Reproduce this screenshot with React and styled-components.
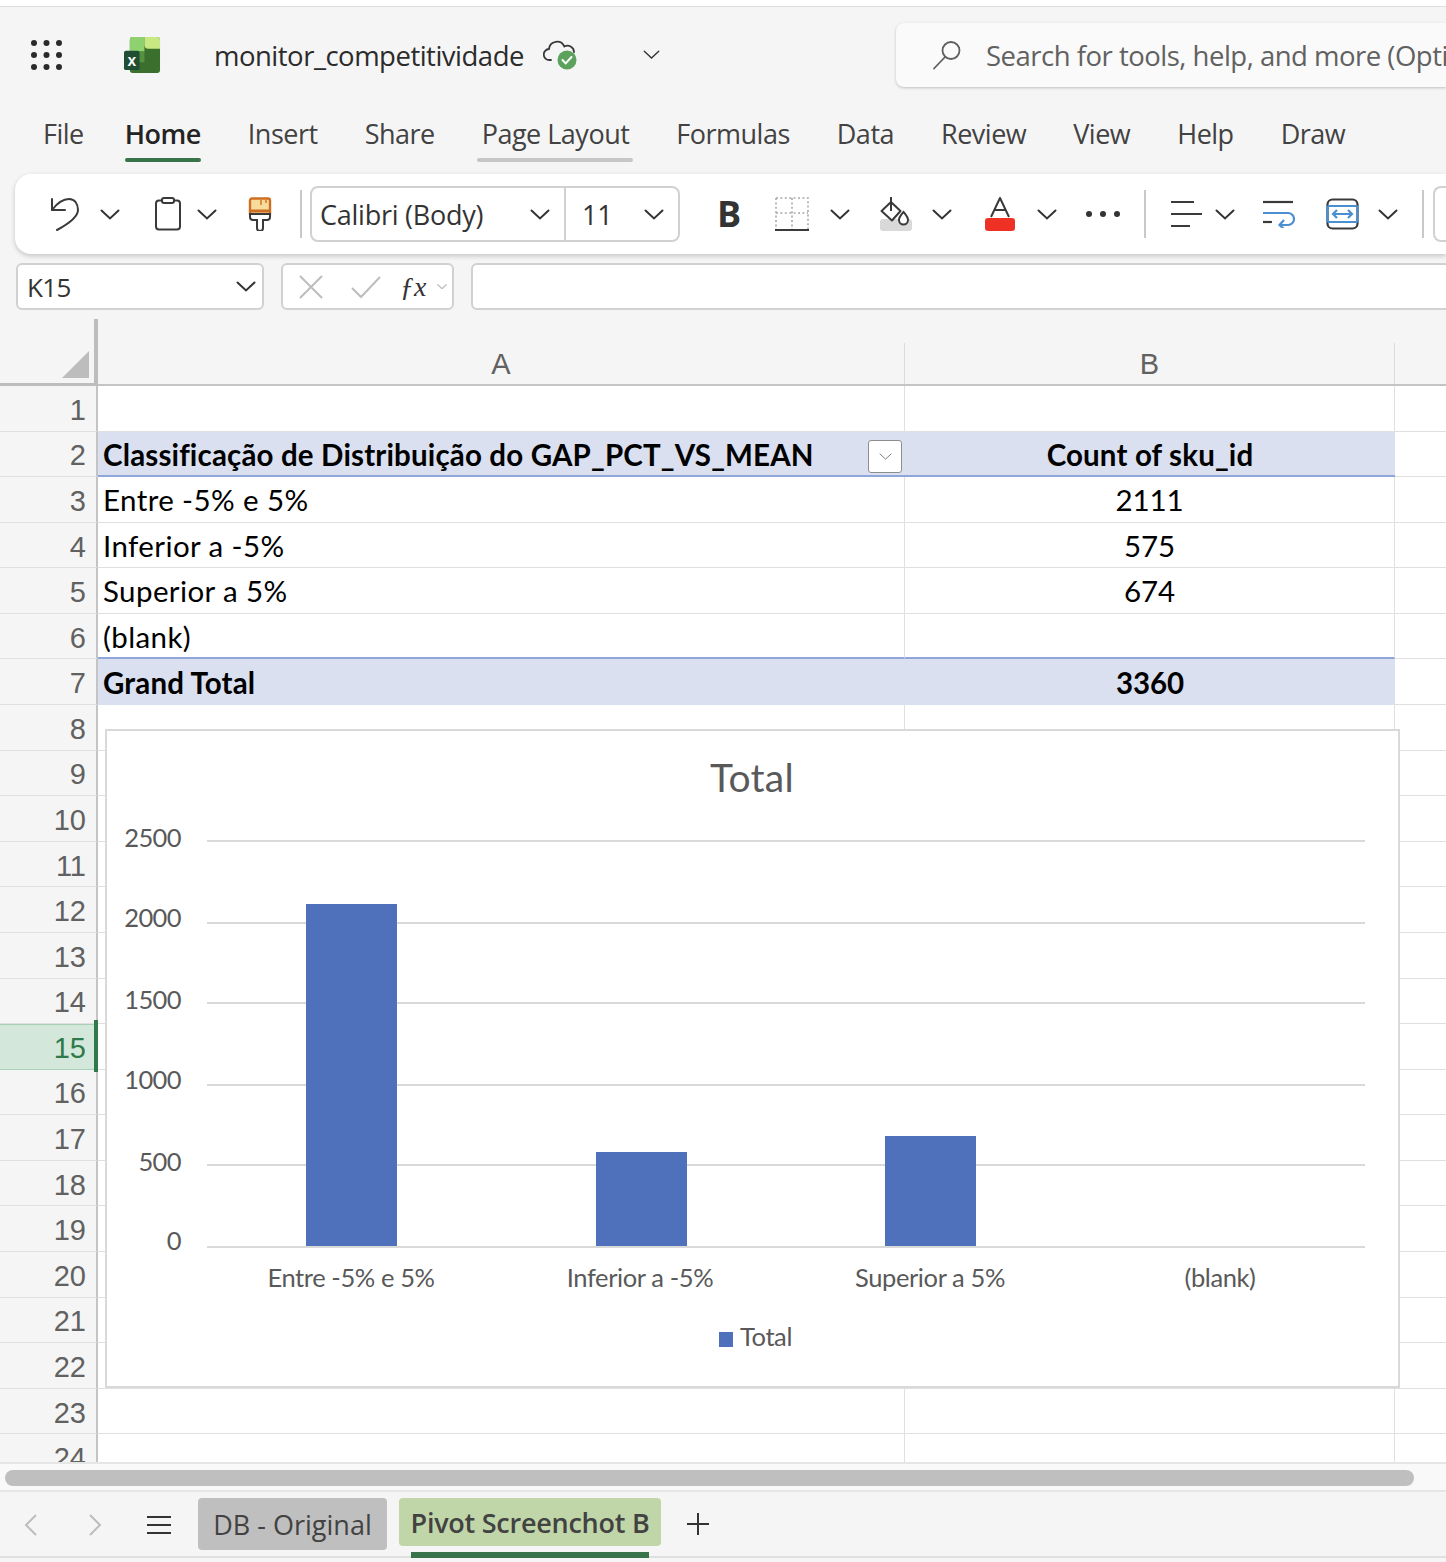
import React from "react";
import styled, { createGlobalStyle } from "styled-components";

const UI_FONT = `"Open Sans", "Noto Sans", sans-serif`;
const CELL_FONT = `Lato, "Open Sans", sans-serif`;

const GlobalStyle = createGlobalStyle`
  html, body {
    margin: 0;
    padding: 0;
    background: #fff;
  }
  * {
    box-sizing: border-box;
  }
`;

const Shell = styled.div`
  width: 1446px;
  height: 1562px;
  overflow: hidden;
  background: #f5f5f5;
  font-family: ${UI_FONT};
  display: flex;
  flex-direction: column;
`;

const TopStrip = styled.div`
  height: 7px;
  flex: none;
  background: #fff;
  border-bottom: 1px solid #dedede;
`;

const TitleBar = styled.div`
  height: 96px;
  flex: none;
  display: flex;
  align-items: center;
  padding-left: 31px;
`;

const FileName = styled.div`
  margin-left: 53px;
  width: 309px;
  font-size: 27.5px;
  letter-spacing: -0.5px;
  color: #2b2b2b;
  white-space: nowrap;
`;

const SearchBox = styled.div`
  margin-left: auto;
  width: 550px;
  height: 64px;
  flex: none;
  display: flex;
  align-items: center;
  gap: 24px;
  padding-left: 36px;
  background: #fafafa;
  border-radius: 8px 0 0 8px;
  box-shadow: 0 1px 3px rgba(0, 0, 0, 0.22);
  color: #616161;
  font-size: 27.5px;
  letter-spacing: -0.5px;
  white-space: nowrap;
  overflow: hidden;
  svg {
    flex: none;
  }
`;

const MenuBar = styled.div`
  height: 59px;
  flex: none;
  display: flex;
  gap: 47px;
  padding-left: 43px;
`;

const MenuItem = styled.div`
  position: relative;
  height: 59px;
  line-height: 62px;
  font-size: 27px;
  letter-spacing: -0.5px;
  white-space: nowrap;
  margin-left: ${(p) => (p.$active ? -6 : 0)}px;
  color: ${(p) => (p.$active ? "#242424" : "#424242")};
  font-weight: ${(p) => (p.$active ? 600 : 400)};
  &::after {
    content: "";
    display: ${(p) => (p.$line ? "block" : "none")};
    position: absolute;
    left: ${(p) => (p.$active ? "0" : "-5px")};
    right: ${(p) => (p.$active ? "0" : "-4px")};
    bottom: 0;
    height: 4px;
    border-radius: 2px;
    background: ${(p) => (p.$active ? "#38734a" : "#c6c6c6")};
  }
`;

const Ribbon = styled.div`
  margin: 12px 0 0 15px;
  height: 80px;
  flex: none;
  display: flex;
  align-items: center;
  background: #fff;
  border-radius: 16px 0 0 16px;
  box-shadow: 0 2px 5px rgba(0, 0, 0, 0.2);
`;

const Slot = styled.div`
  flex: none;
  margin-left: ${(p) => p.$ml || 0}px;
  display: flex;
  align-items: center;
  justify-content: center;
`;

const RibbonDivider = styled.div`
  flex: none;
  width: 2px;
  height: 48px;
  margin-left: ${(p) => p.$ml}px;
  background: #c8c8c8;
`;

const FontGroup = styled.div`
  flex: none;
  width: 370px;
  height: 56px;
  margin-left: 8px;
  display: flex;
  border: 2px solid #d1d1d1;
  border-radius: 8px;
  color: #333;
  font-size: 27px;
  letter-spacing: -0.25px;
`;

const FontField = styled.div`
  width: ${(p) => p.$w}px;
  flex: none;
  display: flex;
  align-items: center;
  justify-content: space-between;
  padding: 0 14px 0 8px;
  border-right: ${(p) => (p.$split ? "2px solid #d1d1d1" : "none")};
  white-space: nowrap;
  &:last-child {
    padding-left: 16px;
  }
`;

const BoldMark = styled.span`
  font-family: ${UI_FONT};
  font-weight: 700;
  font-size: 36px;
  line-height: 40px;
  color: #333;
`;

const RibbonStub = styled.div`
  flex: none;
  width: 40px;
  height: 56px;
  margin-left: 9px;
  border: 2px solid #d1d1d1;
  border-radius: 8px 0 0 8px;
  border-right: none;
`;

const FormulaRow = styled.div`
  margin-top: 9px;
  padding-left: 16px;
  height: 47px;
  flex: none;
  display: flex;
`;

const FormulaBox = styled.div`
  background: #fff;
  border: 2px solid #d1d1d1;
  border-radius: 6px;
  height: 47px;
  flex: none;
  width: ${(p) => p.$w}px;
  margin-left: ${(p) => p.$ml || 0}px;
  display: flex;
  align-items: center;
`;

const NameText = styled.span`
  flex: 1;
  padding-left: 9px;
  font-size: 26px;
  letter-spacing: -0.6px;
  color: #333;
`;

const ColumnHead = styled.div`
  margin-top: 9px;
  height: 67px;
  flex: none;
  display: grid;
  grid-template-columns: 98px 807px 490px 1fr;
  border-bottom: 2px solid #c4c4c4;
`;

const Corner = styled.div`
  position: relative;
  border-right: 4px solid #bdbdbd;
  margin-bottom: -2px;
  &::before {
    content: "";
    position: absolute;
    left: 0;
    right: -4px;
    bottom: 0;
    height: 3px;
    background: #bdbdbd;
  }
  &::after {
    content: "";
    position: absolute;
    left: 62px;
    bottom: 8px;
    width: 27px;
    height: 27px;
    background: #bdbdbd;
    clip-path: polygon(100% 0, 100% 100%, 0 100%);
  }
`;

const ColLabel = styled.div`
  margin-top: 24px;
  padding-top: 2px;
  display: flex;
  align-items: center;
  justify-content: center;
  border-right: ${(p) => (p.$plain ? "none" : "1px solid #dcdcdc")};
  font-family: "Liberation Sans", sans-serif;
  font-size: 29px;
  color: #616161;
`;

const Sheet = styled.div`
  position: relative;
  height: 1076px;
  flex: none;
  overflow: hidden;
  background: #fff;
`;

const Row = styled.div`
  display: grid;
  grid-template-columns: 98px 807px 490px 1fr;
  height: 45.58px;
`;

const RowHead = styled.div`
  display: flex;
  align-items: center;
  justify-content: flex-end;
  padding: 4px 10px 0 0;
  background: ${(p) => (p.$selected ? "#d3e8da" : "#f5f5f5")};
  border-right: 2px solid #c4c4c4;
  border-bottom: 1px solid ${(p) => (p.$selected ? "#a9cfb6" : "#e0e0e0")};
  border-top: ${(p) => (p.$selected ? "1px solid #a9cfb6" : "none")};
  font-family: "Liberation Sans", sans-serif;
  font-size: 29px;
  color: ${(p) => (p.$selected ? "#2f7a4b" : "#616161")};
`;

const Cell = styled.div`
  position: relative;
  display: flex;
  align-items: center;
  justify-content: ${(p) => (p.$center ? "center" : "flex-start")};
  padding-left: ${(p) => (p.$center ? 0 : 5)}px;
  padding-top: ${(p) => (p.$under ? 2 : 0)}px;
  background: ${(p) => (p.$band ? "#dae0f0" : "#fff")};
  border-right: ${(p) => (p.$band || p.$free ? "none" : "1px solid #e0e0e0")};
  border-bottom: ${(p) =>
    p.$under ? "2px solid #8ea6da" : p.$band ? "none" : "1px solid #e0e0e0"};
  font-family: ${CELL_FONT};
  font-size: 29.5px;
  letter-spacing: ${(p) => (p.$num ? "-0.1px" : p.$band ? "0.15px" : "0.4px")};
  font-weight: ${(p) => (p.$band ? 700 : 400)};
  color: #000;
  white-space: nowrap;
`;

const FilterButton = styled.div`
  position: absolute;
  right: 3px;
  top: 8px;
  width: 34px;
  height: 33px;
  display: flex;
  align-items: center;
  justify-content: center;
  background: #fff;
  border: 1px solid #8d8d8d;
  border-radius: 3px;
`;

const SelectedMark = styled.div`
  position: absolute;
  left: 94px;
  top: 634px;
  width: 4px;
  height: 52px;
  background: #2f7a4b;
`;

const ChartFrame = styled.div`
  position: absolute;
  left: 105px;
  top: 343px;
  width: 1295px;
  height: 659px;
  background: #fff;
  border: 2px solid #d9d9d9;
`;

const ScrollTrack = styled.div`
  height: 30px;
  flex: none;
  padding: 6px 32px 0 5px;
  background: #f9f9f9;
  border-top: 2px solid #e6e6e6;
  border-bottom: 2px solid #e6e6e6;
`;

const ScrollThumb = styled.div`
  height: 16px;
  border-radius: 8px;
  background: #bfbfbf;
`;

const SheetTabs = styled.div`
  height: 66px;
  flex: none;
  display: flex;
  align-items: flex-start;
  padding: 6px 0 0 24px;
  border-bottom: 2px solid #e0e0e0;
`;

const SheetTab = styled.div`
  position: relative;
  flex: none;
  height: ${(p) => (p.$active ? 48 : 52)}px;
  width: ${(p) => p.$w}px;
  margin-left: ${(p) => p.$ml}px;
  display: flex;
  align-items: center;
  justify-content: center;
  background: ${(p) => (p.$active ? "#c0d6a8" : "#bfbfbf")};
  border-radius: 4px;
  font-size: 27px;
  letter-spacing: ${(p) => (p.$active ? "-0.25px" : "0")};
  font-weight: ${(p) => (p.$active ? 600 : 400)};
  color: #424242;
  white-space: nowrap;
  &::after {
    content: "";
    display: ${(p) => (p.$active ? "block" : "none")};
    position: absolute;
    left: 12px;
    right: 12px;
    top: 54px;
    height: 6px;
    background: #38734a;
  }
`;

const FxText = styled.i`
  margin: 0 11px 0 18px;
  font-family: "Liberation Serif", serif;
  font-size: 28px;
  color: #333;
`;

const Chevron = ({ w = 20, color = "#333", sw = 2 }) => (
  <svg width={w} height={w * 0.55} viewBox="0 0 20 11" fill="none">
    <path d="M1.5 1.5 10 9.5l8.5-8" stroke={color} strokeWidth={sw} strokeLinecap="round" />
  </svg>
);

const Waffle = () => (
  <svg width="31" height="32" viewBox="0 0 31 32" fill="#2b2b2b">
    {[4, 16, 28].map((y) =>
      [3, 15.5, 28].map((x) => <circle key={`${x}-${y}`} cx={x} cy={y} r="3" />)
    )}
  </svg>
);

const ExcelLogo = () => (
  <svg width="37" height="37" viewBox="0 0 38 38" style={{ marginLeft: 62 }}>
    <rect x="6" y="0" width="31" height="37" rx="3" fill="#3a6f2d" />
    <path d="M6 3a3 3 0 0 1 3-3h12v15H6z" fill="#8fd16e" />
    <path d="M21 0h13a3 3 0 0 1 3 3v9H25a4 4 0 0 1-4-4z" fill="#c8e884" />
    <path d="M6 15h15v11H6z" fill="#57903f" />
    <rect x="0" y="14" width="16" height="20" rx="2" fill="#1f4e33" />
    <text x="8" y="30" textAnchor="middle" fontFamily="Liberation Sans" fontWeight="700" fontSize="16" fill="#fff">x</text>
  </svg>
);

const CloudCheck = () => (
  <svg width="36" height="32" viewBox="0 0 36 32" fill="none" style={{ marginLeft: 20 }}>
    <path
      d="M8 21H6.5A5.5 5.5 0 0 1 6 10a8 8 0 0 1 15.3-2.5A6.5 6.5 0 0 1 31 13"
      stroke="#3a3a3a"
      strokeWidth="1.8"
      strokeLinecap="round"
    />
    <circle cx="24" cy="21" r="9.5" fill="#5ba35c" />
    <path d="m19.5 21 3.2 3.4 5.8-6.4" stroke="#fff" strokeWidth="2" strokeLinecap="round" />
  </svg>
);

const SearchIcon = () => (
  <svg width="30" height="30" viewBox="0 0 30 30" fill="none" stroke="#5f5f5f" strokeWidth="1.8">
    <circle cx="19" cy="10.5" r="8.5" />
    <path d="M13 17 2 28.5" strokeLinecap="round" />
  </svg>
);

const UndoIcon = () => (
  <svg width="30" height="34" viewBox="0 0 30 34" fill="none" stroke="#3a3a3a" strokeWidth="2" strokeLinecap="round" strokeLinejoin="round">
    <path d="M2 2v11h13" />
    <path d="M2 13C8 5 14 2 19 2c6 0 9 5 9 11 0 6-8 13-21 20" />
  </svg>
);

const ClipboardIcon = () => (
  <svg width="28" height="34" viewBox="0 0 28 34" fill="none" stroke="#3a3a3a" strokeWidth="2">
    <rect x="2" y="3.5" width="24" height="29" rx="3" />
    <rect x="8" y="1" width="12" height="5" rx="2" fill="#fff" />
  </svg>
);

const BrushIcon = () => (
  <svg width="24" height="34" viewBox="0 0 24 34" fill="none">
    <rect x="2" y="1.5" width="20" height="18" rx="2" fill="#f7dc9c" stroke="#cf6f22" strokeWidth="2.4" />
    <path d="M2 14h20" stroke="#cf6f22" strokeWidth="3" />
    <path d="M13 3v5M18 3v3" stroke="#cf6f22" strokeWidth="1.4" />
    <path d="M2 17h20v3a3 3 0 0 1-3 3h-4v8a3 3 0 0 1-6 0v-8H5a3 3 0 0 1-3-3z" fill="#fff" stroke="#3a3a3a" strokeWidth="2" />
  </svg>
);

const BordersIcon = () => (
  <svg width="36" height="36" viewBox="0 0 36 36" fill="none">
    <path d="M2 2h32v31M2 2v31M18 2v31M2 17h32" stroke="#a8a8a8" strokeWidth="1.6" strokeDasharray="2 2.4" />
    <path d="M1 34h34" stroke="#3a3a3a" strokeWidth="2" />
  </svg>
);

const FillIcon = () => (
  <svg width="32" height="36" viewBox="0 0 32 36" fill="none">
    <rect x="0" y="23" width="32" height="12" rx="3" fill="#d9d9d9" />
    <path d="M11 6 1.5 15l10.5 9.5 8.5-9.5z" fill="#fff" stroke="#3a3a3a" strokeWidth="2" strokeLinejoin="round" />
    <path d="M11 1v14" stroke="#3a3a3a" strokeWidth="2" />
    <path d="M23.5 16c2.5 3 4.5 5 4.5 8a4.5 4.5 0 0 1-9 0c0-3 2-5 4.5-8z" fill="#fff" stroke="#3a3a3a" strokeWidth="2" />
  </svg>
);

const FontColorIcon = () => (
  <svg width="30" height="34" viewBox="0 0 30 34" fill="none">
    <path d="M6 20 15 1l9 19M9 13h12" stroke="#3a3a3a" strokeWidth="2" strokeLinejoin="round" />
    <rect x="0" y="21" width="30" height="13" rx="3" fill="#ee3124" />
  </svg>
);

const DotsIcon = () => (
  <svg width="36" height="8" viewBox="0 0 36 8" fill="#333">
    <circle cx="4" cy="4" r="3" />
    <circle cx="18" cy="4" r="3" />
    <circle cx="32" cy="4" r="3" />
  </svg>
);

const AlignIcon = () => (
  <svg width="32" height="28" viewBox="0 0 32 28" stroke="#3a3a3a" strokeWidth="2.2">
    <path d="M1 2h23M1 14h31M1 26h19" />
  </svg>
);

const WrapIcon = () => (
  <svg width="33" height="28" viewBox="0 0 33 28" fill="none" strokeWidth="2.2">
    <path d="M1 2h30" stroke="#3a3a3a" />
    <path d="M1 13h25a5.5 5.5 0 0 1 0 12h-7" stroke="#4a8fd0" />
    <path d="m22 20-4.5 5 4.5 4" stroke="#4a8fd0" />
    <path d="M1 22h9" stroke="#3a3a3a" />
  </svg>
);

const MergeIcon = () => (
  <svg width="33" height="32" viewBox="0 0 33 32" fill="none" strokeWidth="2.2">
    <rect x="1.5" y="1.5" width="30" height="29" rx="5" stroke="#3a3a3a" />
    <path d="M1.5 8h30M1.5 24h30" stroke="#4a8fd0" />
    <path d="M1.5 8v16M31.5 8v16" stroke="#4a8fd0" />
    <path d="M7 16h19M11 12l-4 4 4 4M22 12l4 4-4 4" stroke="#4a8fd0" />
  </svg>
);

const FxIcons = () => (
  <>
    <svg width="26" height="26" viewBox="0 0 26 26" fill="none" stroke="#bdbdbd" strokeWidth="2" style={{ marginLeft: 15 }}>
      <path d="M2 2l22 22M24 2 2 24" />
    </svg>
    <svg width="32" height="24" viewBox="0 0 32 24" fill="none" stroke="#bdbdbd" strokeWidth="2" style={{ marginLeft: 26 }}>
      <path d="M2 13l9 9L30 2" />
    </svg>
    <FxText>ƒx</FxText>
    <Chevron w={10} color="#bdbdbd" sw={2.5} />
  </>
);

const BARS = [
  { x: 306, top: 904 },
  { x: 596, top: 1152 },
  { x: 885, top: 1136 },
];
const GRID_LINES = [841, 923, 1003, 1085, 1165, 1247];
const Y_LABELS = [
  { label: "2500", y: 847 },
  { label: "2000", y: 927 },
  { label: "1500", y: 1009 },
  { label: "1000", y: 1089 },
  { label: "500", y: 1171 },
  { label: "0", y: 1250 },
];
const CATEGORIES = [
  { label: "Entre -5% e 5%", x: 351 },
  { label: "Inferior a -5%", x: 640 },
  { label: "Superior a 5%", x: 930 },
  { label: "(blank)", x: 1220 },
];

// viewBox uses page coordinates, easier to check against the screenshot
const Chart = () => (
  <svg width="1291" height="655" viewBox="107 731 1291 655" fontFamily="Lato, sans-serif" fill="#595959" style={{ display: "block" }}>
    <text x="752" y="792" textAnchor="middle" fontSize="39" letterSpacing="0.3">Total</text>
    {GRID_LINES.map((y) => (
      <line key={y} x1="207" x2="1365" y1={y} y2={y} stroke="#d9d9d9" strokeWidth="2" />
    ))}
    {Y_LABELS.map((t) => (
      <text key={t.label} x="181" y={t.y} textAnchor="end" fontSize="25.5" letterSpacing="-0.6">{t.label}</text>
    ))}
    {BARS.map((b) => (
      <rect key={b.x} x={b.x} y={b.top} width="91" height={1246 - b.top} fill="#4f71bc" />
    ))}
    {CATEGORIES.map((c) => (
      <text key={c.label} x={c.x} y="1287" textAnchor="middle" fontSize="25.5" letterSpacing="-0.4">{c.label}</text>
    ))}
    <rect x="719" y="1332" width="14" height="15" fill="#4f71bc" />
    <text x="740" y="1346" fontSize="25.5" letterSpacing="-0.4">Total</text>
  </svg>
);

const TABLE = {
  2: { a: "Classificação de Distribuição do GAP_PCT_VS_MEAN", b: "Count of sku_id", band: true, under: true, filter: true },
  3: { a: "Entre -5% e 5%", b: "2111", num: true },
  4: { a: "Inferior a -5%", b: "575", num: true },
  5: { a: "Superior a 5%", b: "674", num: true },
  6: { a: "(blank)", b: "", under: true },
  7: { a: "Grand Total", b: "3360", band: true, num: true },
};

const MENU = ["File", "Home", "Insert", "Share", "Page Layout", "Formulas", "Data", "Review", "View", "Help", "Draw"];
const ROWS = Array.from({ length: 24 }, (_, i) => i + 1);

const App = () => {
  return (
    <>
      <GlobalStyle />
      <Shell>
        <TopStrip />
        <TitleBar>
          <Waffle />
          <ExcelLogo />
          <FileName>monitor_competitividade</FileName>
          <CloudCheck />
          <Slot $ml={64}><Chevron w={17} sw={1.6} /></Slot>
          <SearchBox>
            <SearchIcon />
            <span>Search for tools, help, and more (Option + Q)</span>
          </SearchBox>
        </TitleBar>

        <MenuBar>
          {MENU.map((m) => (
            <MenuItem key={m} $active={m === "Home"} $line={m === "Home" || m === "Page Layout"}>{m}</MenuItem>
          ))}
        </MenuBar>

        <Ribbon>
          <Slot $ml={35}><UndoIcon /></Slot>
          <Slot $ml={20}><Chevron /></Slot>
          <Slot $ml={34}><ClipboardIcon /></Slot>
          <Slot $ml={15}><Chevron /></Slot>
          <Slot $ml={31}><BrushIcon /></Slot>
          <RibbonDivider $ml={28} />
          <FontGroup>
            <FontField $w={254} $split>Calibri (Body)<Chevron /></FontField>
            <FontField $w={112}>11<Chevron /></FontField>
          </FontGroup>
          <Slot $ml={37}><BoldMark>B</BoldMark></Slot>
          <Slot $ml={33}><BordersIcon /></Slot>
          <Slot $ml={20}><Chevron /></Slot>
          <Slot $ml={30}><FillIcon /></Slot>
          <Slot $ml={20}><Chevron /></Slot>
          <Slot $ml={33}><FontColorIcon /></Slot>
          <Slot $ml={22}><Chevron /></Slot>
          <Slot $ml={28}><DotsIcon /></Slot>
          <RibbonDivider $ml={23} />
          <Slot $ml={24}><AlignIcon /></Slot>
          <Slot $ml={13}><Chevron /></Slot>
          <Slot $ml={27}><WrapIcon /></Slot>
          <Slot $ml={31}><MergeIcon /></Slot>
          <Slot $ml={19}><Chevron /></Slot>
          <RibbonDivider $ml={24} />
          <RibbonStub />
        </Ribbon>

        <FormulaRow>
          <FormulaBox $w={248}>
            <NameText>K15</NameText>
            <Slot style={{ marginRight: 6 }}><Chevron /></Slot>
          </FormulaBox>
          <FormulaBox $w={173} $ml={17}><FxIcons /></FormulaBox>
          <FormulaBox $w={1000} $ml={17} />
        </FormulaRow>

        <ColumnHead>
          <Corner />
          <ColLabel>A</ColLabel>
          <ColLabel>B</ColLabel>
          <ColLabel $plain />
        </ColumnHead>

        <Sheet>
          {ROWS.map((n) => {
            const row = TABLE[n] || {};
            return (
              <Row key={n}>
                <RowHead $selected={n === 15}>{n}</RowHead>
                <Cell $band={row.band} $under={row.under}>
                  {row.a}
                  {row.filter && (
                    <FilterButton><Chevron w={13} color="#777" sw={1.5} /></FilterButton>
                  )}
                </Cell>
                <Cell $band={row.band} $under={row.under} $num={row.num} $center>{row.b}</Cell>
                <Cell $free />
              </Row>
            );
          })}
          <SelectedMark />
          <ChartFrame><Chart /></ChartFrame>
        </Sheet>

        <ScrollTrack><ScrollThumb /></ScrollTrack>

        <SheetTabs>
          <Slot style={{ marginTop: 16 }}>
            <svg width="14" height="22" viewBox="0 0 14 22" fill="none" stroke="#bdbdbd" strokeWidth="2"><path d="M12 1 2 11l10 10" /></svg>
          </Slot>
          <Slot $ml={50} style={{ marginTop: 16 }}>
            <svg width="14" height="22" viewBox="0 0 14 22" fill="none" stroke="#bdbdbd" strokeWidth="2"><path d="m2 1 10 10L2 21" /></svg>
          </Slot>
          <Slot $ml={44} style={{ marginTop: 17 }}>
            <svg width="26" height="20" viewBox="0 0 26 20" stroke="#333" strokeWidth="2.2"><path d="M1 2h24M1 10h24M1 18h24" /></svg>
          </Slot>
          <SheetTab $w={189} $ml={26}>DB - Original</SheetTab>
          <SheetTab $w={262} $ml={12} $active>Pivot Screenchot B</SheetTab>
          <Slot $ml={26} style={{ marginTop: 15 }}>
            <svg width="22" height="22" viewBox="0 0 22 22" stroke="#333" strokeWidth="2"><path d="M11 0v22M0 11h22" /></svg>
          </Slot>
        </SheetTabs>
      </Shell>
    </>
  );
};

export default App;
